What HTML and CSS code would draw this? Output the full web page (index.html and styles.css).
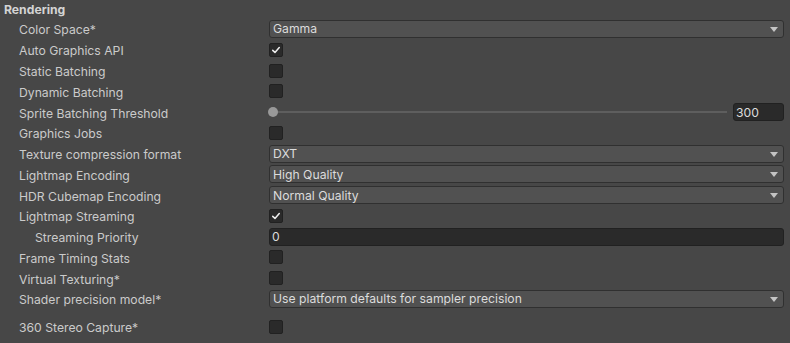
FILE: index.html
```html
<!DOCTYPE html>
<html lang="en">
<head>
    <meta charset="UTF-8">
    <meta name="viewport" content="width=device-width, initial-scale=1.0">
    <title>Player Settings - Rendering</title>
    <link rel="stylesheet" href="styles.css">
</head>
<body>
    <div class="inspector">
        <div class="section-title">Rendering</div>

        <div class="row">
            <div class="label">Color Space*</div>
            <div class="dropdown"><span>Gamma</span><i class="arrow"></i></div>
        </div>
        <div class="row">
            <div class="label">Auto Graphics API</div>
            <div class="checkbox checked">
                <svg viewBox="0 0 14 14"><path d="M3.2 7.4 L5.8 9.8 L10.8 4.2" /></svg>
            </div>
        </div>
        <div class="row">
            <div class="label">Static Batching</div>
            <div class="checkbox"></div>
        </div>
        <div class="row">
            <div class="label">Dynamic Batching</div>
            <div class="checkbox"></div>
        </div>
        <div class="row">
            <div class="label">Sprite Batching Threshold</div>
            <div class="slider">
                <div class="track"><span class="thumb"></span></div>
                <div class="number-field">300</div>
            </div>
        </div>
        <div class="row">
            <div class="label">Graphics Jobs</div>
            <div class="checkbox"></div>
        </div>
        <div class="row">
            <div class="label">Texture compression format</div>
            <div class="dropdown"><span>DXT</span><i class="arrow"></i></div>
        </div>
        <div class="row">
            <div class="label">Lightmap Encoding</div>
            <div class="dropdown"><span>High Quality</span><i class="arrow"></i></div>
        </div>
        <div class="row">
            <div class="label">HDR Cubemap Encoding</div>
            <div class="dropdown"><span>Normal Quality</span><i class="arrow"></i></div>
        </div>
        <div class="row">
            <div class="label">Lightmap Streaming</div>
            <div class="checkbox checked">
                <svg viewBox="0 0 14 14"><path d="M3.2 7.4 L5.8 9.8 L10.8 4.2" /></svg>
            </div>
        </div>
        <div class="row">
            <div class="label indent">Streaming Priority</div>
            <div class="text-field">0</div>
        </div>
        <div class="row">
            <div class="label">Frame Timing Stats</div>
            <div class="checkbox"></div>
        </div>
        <div class="row">
            <div class="label">Virtual Texturing*</div>
            <div class="checkbox"></div>
        </div>
        <div class="row">
            <div class="label">Shader precision model*</div>
            <div class="dropdown"><span>Use platform defaults for sampler precision</span><i class="arrow"></i></div>
        </div>

        <div class="spacer"></div>

        <div class="row">
            <div class="label">360 Stereo Capture*</div>
            <div class="checkbox"></div>
        </div>
    </div>
</body>
</html>
```

FILE: styles.css
```css
body {
    margin: 0;
    background: #474747;
    font-family: Inter, "Noto Sans", sans-serif;
    font-size: 12.2px;
    color: #cbcbcb;
}
.inspector {
    padding: 0 6px 0 4px;
}
.section-title {
    height: 18.6px;
    box-sizing: border-box;
    padding-top: 2px;
    line-height: 16.6px;
    font-weight: bold;
    color: #d4d4d4;
}
.row {
    display: grid;
    grid-template-columns: 265px 1fr;
    align-items: center;
    height: 20.77px;
}
.label {
    padding-left: 15px;
    padding-top: 2px;
    white-space: nowrap;
}
.label.indent {
    padding-left: 31px;
}
.spacer {
    height: 7px;
}
.dropdown {
    position: relative;
    height: 18px;
    box-sizing: border-box;
    background: #515151;
    border: 1px solid #303030;
    border-radius: 3px;
    display: flex;
    align-items: center;
    padding-left: 3px;
    color: #dcdcdc;
}
.arrow {
    position: absolute;
    right: 5px;
    top: 6px;
    width: 0;
    height: 0;
    border-left: 4px solid transparent;
    border-right: 4px solid transparent;
    border-top: 5px solid #c4c4c4;
}
.checkbox {
    width: 14px;
    height: 14px;
    box-sizing: border-box;
    background: #2a2a2a;
    border: 1px solid #212121;
    border-radius: 2px;
}
.checkbox svg {
    display: block;
    width: 12px;
    height: 12px;
}
.checkbox path {
    fill: none;
    stroke: #eeeeee;
    stroke-width: 1.8;
    stroke-linecap: round;
    stroke-linejoin: round;
}
.slider {
    display: flex;
    align-items: center;
    height: 18px;
}
.track {
    position: relative;
    flex: 1;
    height: 2px;
    margin-left: 4px;
    margin-right: 6px;
    background: #5e5e5e;
}
.thumb {
    position: absolute;
    left: -5px;
    top: -4px;
    width: 10px;
    height: 10px;
    border-radius: 50%;
    background: #999999;
}
.number-field,
.text-field {
    height: 18px;
    box-sizing: border-box;
    background: #2a2a2a;
    border: 1px solid #212121;
    border-radius: 3px;
    padding-left: 2px;
    display: flex;
    align-items: center;
    color: #dcdcdc;
}
.number-field {
    width: 51px;
}
```
